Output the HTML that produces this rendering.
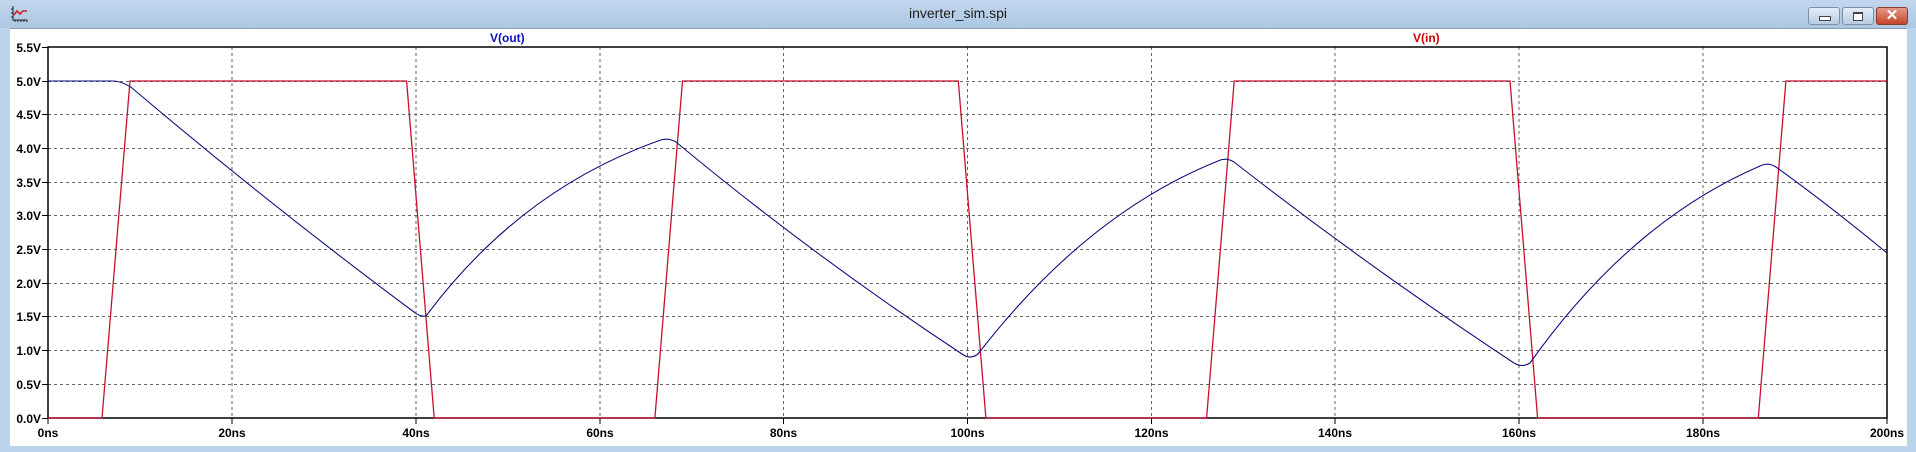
<!DOCTYPE html>
<html><head><meta charset="utf-8"><style>
html,body{margin:0;padding:0;width:1916px;height:452px;overflow:hidden;background:#bcd3ec;font-family:"Liberation Sans",sans-serif}
.tb{position:absolute;left:0;top:0;width:1916px;height:28px;background:linear-gradient(#c2d7ee,#adc7e3)}
.title{position:absolute;left:0;width:1916px;top:5px;text-align:center;font-size:14px;color:#1e1e1e}
.client{position:absolute;left:10px;top:28px;width:1897px;height:417px;background:#fff;border-top:1px solid #8a9fb6}
.btn{position:absolute;top:7px;width:30px;height:16px;border:1px solid #7b8fa8;border-radius:3px;background:linear-gradient(#e4edf7,#b9cce2)}
.cls{background:linear-gradient(#e59a86,#c5442b);border-color:#8a3a2a}
</style></head><body>
<div class="tb"></div>
<div class="title">inverter_sim.spi</div>
<svg style="position:absolute;left:11px;top:5px" width="18" height="18" viewBox="0 0 18 18">
<path d="M2 1V15H16" stroke="#222" fill="none"/><path d="M4 15v2M7 15v2M10 15v2M13 15v2M16 15v2M0 4h2M0 8h2M0 12h2" stroke="#222"/>
<path d="M3 10 L6 6 L9 9 L12 6 L16 6" stroke="#d02020" stroke-width="1.6" fill="none"/></svg>
<div class="btn" style="left:1808px"><div style="position:absolute;left:10px;top:8px;width:10px;height:3px;border:1px solid #444;background:#fff"></div></div>
<div class="btn" style="left:1842px"><div style="position:absolute;left:10px;top:4px;width:8px;height:6px;border:1px solid #444;border-top-width:2px;background:#fff"></div></div>
<div class="btn cls" style="left:1876px"><div style="position:absolute;left:0;width:30px;top:-2px;text-align:center;color:#fff;font-weight:bold;font-size:15px">✕</div></div>
<div class="client"></div>
<svg style="position:absolute;left:0;top:0" width="1916" height="452" font-family="Liberation Sans,sans-serif" font-weight="bold" font-size="12">
<g stroke="#666" stroke-dasharray="3,3" stroke-width="1">
<path d="M232 47V418M416 47V418M600 47V418M783.5 47V418M967.5 47V418M1151.5 47V418M1335 47V418M1519 47V418M1703 47V418"/>
<path d="M48 81.5H1887M48 114.5H1887M48 148.5H1887M48 182.5H1887M48 215.5H1887M48 249.5H1887M48 283.5H1887M48 316.5H1887M48 350.5H1887M48 384.5H1887"/>
</g>
<rect x="48" y="47" width="1839" height="371" fill="none" stroke="#000" stroke-width="1.5"/>
<g stroke="#000"><path d="M42 47.5H48M42 81.5H48M42 114.5H48M42 148.5H48M42 182.5H48M42 215.5H48M42 249.5H48M42 283.5H48M42 316.5H48M42 350.5H48M42 384.5H48M42 418.5H48"/>
<path d="M48 418V424M232 418V424M416 418V424M600 418V424M783.5 418V424M967.5 418V424M1151.5 418V424M1335 418V424M1519 418V424M1703 418V424M1887 418V424"/></g>
<g text-anchor="end" fill="#000"><text x="41" y="52">5.5V</text><text x="41" y="86">5.0V</text><text x="41" y="119">4.5V</text><text x="41" y="153">4.0V</text><text x="41" y="187">3.5V</text><text x="41" y="220">3.0V</text><text x="41" y="254">2.5V</text><text x="41" y="288">2.0V</text><text x="41" y="321">1.5V</text><text x="41" y="355">1.0V</text><text x="41" y="389">0.5V</text><text x="41" y="423">0.0V</text></g>
<g text-anchor="middle" fill="#000"><text x="48" y="437">0ns</text><text x="232" y="437">20ns</text><text x="416" y="437">40ns</text><text x="600" y="437">60ns</text><text x="783.5" y="437">80ns</text><text x="967.5" y="437">100ns</text><text x="1151.5" y="437">120ns</text><text x="1335" y="437">140ns</text><text x="1519" y="437">160ns</text><text x="1703" y="437">180ns</text><text x="1887" y="437">200ns</text></g>
<text x="490" y="42" fill="#1010c0">V(out)</text>
<text x="1413" y="42" fill="#d00000">V(in)</text>
<path d="M48 418H102L130 81H406.6L434.2 418H654.9L682.5 81H958.3L985.9 418H1206.6L1234.2 81H1510L1537.6 418H1758.3L1785.9 81H1887" fill="none" stroke="#c8102e" stroke-width="1.3"/>
<path d="M48 81H112Q122 81 132 88Q270 205 414 312Q420 317 426 316Q520 190 658 141Q667 137 676 142Q812 255 962 354Q970 360 978 354Q1086 214 1218 161Q1226 157 1234 162Q1370 268 1514 363Q1522 368 1530 363Q1630 222 1760 166Q1768 162 1776 167Q1830 206 1887 253" fill="none" stroke="#101080" stroke-width="1.1"/>
</svg>
</body></html>
